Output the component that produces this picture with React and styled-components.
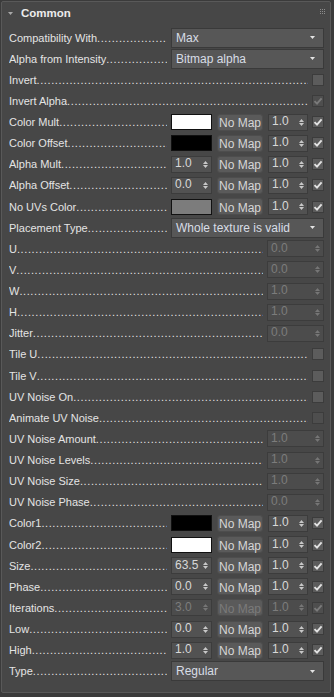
import React from 'react'
import styled, { createGlobalStyle } from 'styled-components'

const GlobalStyle = createGlobalStyle`
  html, body {
    margin: 0;
    padding: 0;
    background: #3b3b3b;
  }
  body {
    padding: 1px 0 0 1px;
    font-family: "Liberation Sans", Arial, sans-serif;
    font-size: 11px;
  }
`

const rows = [
  { label: 'Compatibility With', kind: 'dropdown', value: 'Max' },
  { label: 'Alpha from Intensity', kind: 'dropdown', value: 'Bitmap alpha' },
  { label: 'Invert', kind: 'check', checked: false },
  { label: 'Invert Alpha', kind: 'check', checked: true, disabled: true },
  { label: 'Color Mult', kind: 'map', swatch: '#ffffff' },
  { label: 'Color Offset', kind: 'map', swatch: '#000000' },
  { label: 'Alpha Mult', kind: 'map', num: '1.0' },
  { label: 'Alpha Offset', kind: 'map', num: '0.0' },
  { label: 'No UVs Color', kind: 'map', swatch: '#7c7c7c' },
  { label: 'Placement Type', kind: 'dropdown', value: 'Whole texture is valid' },
  { label: 'U', kind: 'spin', num: '0.0' },
  { label: 'V', kind: 'spin', num: '0.0' },
  { label: 'W', kind: 'spin', num: '1.0' },
  { label: 'H', kind: 'spin', num: '1.0' },
  { label: 'Jitter', kind: 'spin', num: '0.0' },
  { label: 'Tile U', kind: 'check', checked: false },
  { label: 'Tile V', kind: 'check', checked: false },
  { label: 'UV Noise On', kind: 'check', checked: false },
  { label: 'Animate UV Noise', kind: 'check', checked: false, disabled: true },
  { label: 'UV Noise Amount', kind: 'spin', num: '1.0' },
  { label: 'UV Noise Levels', kind: 'spin', num: '1.0' },
  { label: 'UV Noise Size', kind: 'spin', num: '1.0' },
  { label: 'UV Noise Phase', kind: 'spin', num: '0.0' },
  { label: 'Color1', kind: 'map', swatch: '#000000' },
  { label: 'Color2', kind: 'map', swatch: '#ffffff' },
  { label: 'Size', kind: 'map', num: '63.5' },
  { label: 'Phase', kind: 'map', num: '0.0' },
  { label: 'Iterations', kind: 'map', num: '3.0', disabled: true },
  { label: 'Low', kind: 'map', num: '0.0' },
  { label: 'High', kind: 'map', num: '1.0' },
  { label: 'Type', kind: 'dropdown', value: 'Regular' },
]

export default function App() {
  return (
    <>
      <GlobalStyle />
      <Panel>
        <Header>
          <Caret viewBox="0 0 5 3" width="5" height="3">
            <polygon points="0,0 5,0 2.5,3" fill="#a8a8a8" />
          </Caret>
          <Title>Common</Title>
          <Grip viewBox="0 0 5 5" width="5" height="5">
            {[0, 2, 4].map(x => [0, 2, 4].map(y => (
              <rect key={x + '-' + y} x={x} y={y} width="1" height="1" fill="#8c8c8c" />
            )))}
          </Grip>
        </Header>
        <Rows>
          {rows.map(r => (
            <Row key={r.label}>
              <Label>{r.label}</Label>
              {renderControl(r)}
            </Row>
          ))}
        </Rows>
      </Panel>
    </>
  )
}

function renderControl(r) {
  if (r.kind === 'dropdown') {
    return (
      <Dropdown>
        <span>{r.value}</span>
        <svg viewBox="0 0 5 3" width="5" height="3">
          <polygon points="0,0 5,0 2.5,3" fill="#e4e4e4" />
        </svg>
      </Dropdown>
    )
  }
  if (r.kind === 'check') {
    return <Check checked={r.checked} disabled={r.disabled} />
  }
  if (r.kind === 'spin') {
    return <Spinner $w={57} value={r.num} disabled />
  }
  return (
    <Controls>
      {r.swatch ? <Swatch $color={r.swatch} /> : <Spinner $w={41} value={r.num} disabled={r.disabled} />}
      <MapButton $disabled={r.disabled}>No Map</MapButton>
      <Spinner $w={40} value="1.0" disabled={r.disabled} />
      <Check checked disabled={r.disabled} />
    </Controls>
  )
}

function Spinner({ $w, value, disabled }) {
  return (
    <SpinBox $w={$w} $disabled={disabled}>
      <span>{value}</span>
      <svg viewBox="0 0 5 7" width="5" height="7">
        <polygon points="0,3 5,3 2.5,0" fill={disabled ? '#767676' : '#c8c8c8'} />
        <polygon points="0,4 5,4 2.5,7" fill={disabled ? '#767676' : '#c8c8c8'} />
      </svg>
    </SpinBox>
  )
}

function Check({ checked, disabled }) {
  return (
    <CheckBox $disabled={disabled}>
      {checked && (
        <svg viewBox="0 0 12 12" width="12" height="12">
          <path d="M2.5 6.2 L5 8.7 L9.6 3.4" fill="none"
            stroke={disabled ? '#7a7a7a' : '#e2e2e2'} strokeWidth="1.9" />
        </svg>
      )}
    </CheckBox>
  )
}

const Panel = styled.div`
  width: 330px;
  box-sizing: border-box;
  border: 1px solid #595959;
  border-radius: 2px;
  background: #474747;
  padding-bottom: 10px;
`

const Header = styled.div`
  height: 26px;
  display: flex;
  align-items: center;
  padding: 0 5px 0 6px;
  margin-top: -2px;
`

const Caret = styled.svg`
  margin-top: 1px;
`

const Title = styled.div`
  margin-left: 8px;
  font-weight: bold;
  font-size: 11.5px;
  color: #ececec;
  flex: 1;
`

const Grip = styled.svg`
  margin-top: -4px;
`

const Rows = styled.div`
  display: grid;
  grid-template-columns: minmax(0, 1fr);
  grid-auto-rows: 21.13px;
  padding-top: 1px;
`

const Row = styled.div`
  display: flex;
  align-items: center;
  min-width: 0;
  padding: 0 6px 0 7px;
`

const Label = styled.div`
  flex: 1 1 0;
  min-width: 0;
  overflow: hidden;
  white-space: nowrap;
  color: #e4e4e4;
  margin-right: 4px;

  &::after {
    content: '..........................................................................................................';
    letter-spacing: 0.6px;
  }
`

const Controls = styled.div`
  display: flex;
  flex: none;
  align-items: center;
  gap: 5px;

  & > :last-child {
    margin-left: -1px;
  }
`

const Dropdown = styled.div`
  flex: none;
  width: 153px;
  height: 20px;
  box-sizing: border-box;
  border: 1px solid #3a3a3a;
  background: #575757;
  display: flex;
  align-items: center;
  justify-content: space-between;
  padding: 0 8px 0 4px;
  color: #d8dde6;
  font-size: 12px;
`

const Swatch = styled.div`
  width: 41px;
  height: 16px;
  box-sizing: border-box;
  border: 1px solid #111;
  background: ${p => p.$color};
`

const MapButton = styled.div`
  width: 46px;
  height: 17px;
  box-sizing: border-box;
  border: 1px solid #4d4d4d;
  border-radius: 3px;
  background: #5a5a5a;
  color: ${p => (p.$disabled ? '#7a7a7a' : '#d6d6d6')};
  font-size: 12px;
  display: flex;
  align-items: center;
  justify-content: center;
  padding-top: 2px;
`

const SpinBox = styled.div`
  flex: none;
  width: ${p => p.$w}px;
  height: 17px;
  box-sizing: border-box;
  border: 1px solid #3c3c3c;
  background: ${p => (p.$disabled ? '#4c4c4c' : '#525252')};
  color: ${p => (p.$disabled ? '#7c7c7c' : '#d8d8d8')};
  font-size: 12px;
  display: flex;
  align-items: center;
  justify-content: space-between;
  padding: 0 3px 2px 3px;

  & svg {
    margin-top: 2px;
  }
`

const CheckBox = styled.div`
  flex: none;
  width: 12px;
  height: 12px;
  box-sizing: border-box;
  border: 1px solid #3c3c3c;
  background: ${p => (p.$disabled ? '#4e4e4e' : '#5c5c5c')};
  display: flex;
  align-items: center;
  justify-content: center;

  & svg {
    flex: none;
  }
`
